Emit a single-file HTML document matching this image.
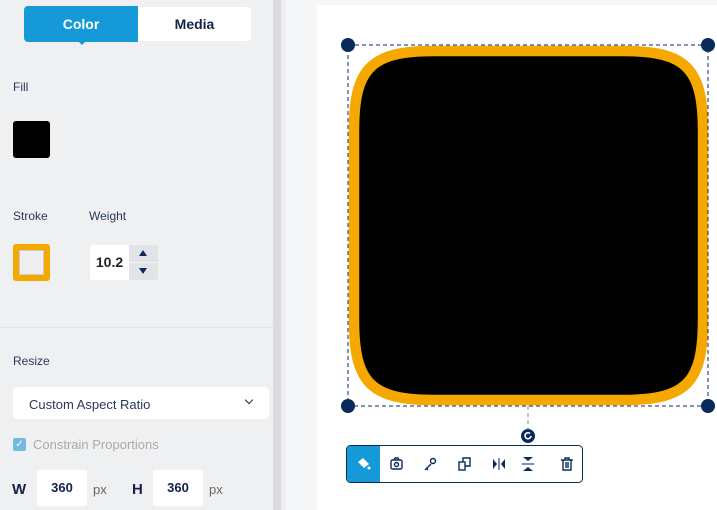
<html><head><style>
body{margin:0;width:717px;height:510px;overflow:hidden;font-family:"Liberation Sans",sans-serif;background:#f5f6f8;position:relative}
.a{position:absolute}
.lbl{font-size:12px;color:#2a3858}
</style></head><body>
<div class="a" style="left:0;top:0;width:273px;height:510px;background:#eff0f2"></div>
<div class="a" style="left:273px;top:0;width:8px;height:510px;background:#dcdcde"></div>
<div class="a" style="left:281px;top:0;width:5px;height:510px;background:#eceef0"></div>
<div class="a" style="left:317px;top:5px;width:400px;height:505px;background:#fff"></div>
<div class="a" style="left:0;top:327px;width:273px;height:1px;background:#e2e3e6"></div>
<div class="a" style="left:24px;top:6px;width:114px;height:36px;background:#1699d8;border-radius:4px 0 0 4px;color:#fff;font-weight:bold;font-size:14px;line-height:36px;text-align:center">Color</div>
<div class="a" style="left:77px;top:40px;width:0;height:0;border-left:5px solid transparent;border-right:5px solid transparent;border-top:5px solid #1699d8"></div>
<div class="a" style="left:138px;top:7px;width:113px;height:34px;background:#fff;border-radius:0 4px 4px 0;color:#14224a;font-weight:bold;font-size:14px;line-height:34px;text-align:center">Media</div>
<div class="a lbl" style="left:13px;top:80px">Fill</div>
<div class="a" style="left:13px;top:121px;width:37px;height:37px;background:#000;border-radius:3px"></div>
<div class="a lbl" style="left:13px;top:209px">Stroke</div>
<div class="a lbl" style="left:89px;top:209px">Weight</div>
<div class="a" style="left:13px;top:244px;width:25px;height:25px;background:#eee;border:6px solid #f5a800;border-radius:3px;box-shadow:inset 0 0 0 1px #ccc"></div>
<div class="a" style="left:90px;top:245px;width:39px;height:35px;background:#fff;border-radius:3px 0 0 3px;font-weight:bold;font-size:14px;line-height:35px;text-align:center;color:#222">10.2</div>
<div class="a" style="left:129px;top:245px;width:29px;height:35px;background:#e2e3e6;border-radius:0 3px 3px 0"></div>
<div class="a" style="left:129px;top:262px;width:29px;height:1px;background:#f3f3f5"></div>
<div class="a" style="left:139px;top:250px;border-left:4px solid transparent;border-right:4px solid transparent;border-bottom:6px solid #0b2a5c"></div>
<div class="a" style="left:139px;top:268px;border-left:4px solid transparent;border-right:4px solid transparent;border-top:6px solid #0b2a5c"></div>
<div class="a lbl" style="left:13px;top:354px">Resize</div>
<div class="a" style="left:13px;top:387px;width:256px;height:32px;background:#fff;border-radius:4px"></div>
<div class="a lbl" style="left:29px;top:397px;font-size:13px">Custom Aspect Ratio</div>
<div class="a" style="left:246px;top:397px;width:5px;height:5px;border-right:1.5px solid #1c2a4a;border-bottom:1.5px solid #1c2a4a;transform:rotate(45deg)"></div>
<div class="a" style="left:13px;top:438px;width:13px;height:13px;background:#74b9e3;border-radius:2px;color:#fff;font-size:10px;line-height:13px;text-align:center">✓</div>
<div class="a" style="left:33px;top:437px;font-size:13px;color:#aaa">Constrain Proportions</div>
<div class="a" style="left:12px;top:481px;font-size:15px;font-weight:bold;color:#14224a">W</div>
<div class="a" style="left:37px;top:470px;width:50px;height:36px;background:#fff;font-weight:bold;font-size:13px;color:#14224a;text-align:center;line-height:36px">360</div>
<div class="a" style="left:93px;top:482px;font-size:13px;color:#666">px</div>
<div class="a" style="left:132px;top:481px;font-size:15px;font-weight:bold;color:#14224a">H</div>
<div class="a" style="left:153px;top:470px;width:50px;height:36px;background:#fff;font-weight:bold;font-size:13px;color:#14224a;text-align:center;line-height:36px">360</div>
<div class="a" style="left:209px;top:482px;font-size:13px;color:#666">px</div>
<svg class="a" style="left:0;top:0" width="717" height="510">
<path d="M354 131C354 68 371 51 434 51H623C686 51 703 68 703 131V320C703 383 686 400 623 400H434C371 400 354 383 354 320Z" fill="#000" stroke="#f5a800" stroke-width="10.5"/>
<rect x="348" y="45" width="360" height="361" fill="none" stroke="#0b2a5c" stroke-dasharray="4 3"/>
<line x1="528" y1="406" x2="528" y2="430" stroke="#8090a8" stroke-dasharray="4 3"/>
<circle cx="348" cy="45" r="7" fill="#0b2a5c"/><circle cx="708" cy="45" r="7" fill="#0b2a5c"/>
<circle cx="348" cy="406" r="7" fill="#0b2a5c"/><circle cx="708" cy="406" r="7" fill="#0b2a5c"/>
<circle cx="528" cy="436" r="7" fill="#0b2a5c"/>
<path d="M531 436a3 3 0 1 1-1-2.5" fill="none" stroke="#fff" stroke-width="1.6"/>
<rect x="346.5" y="445.5" width="236" height="37" rx="4" fill="#fff" stroke="#0b2a5c"/>
<path d="M347 449a3 3 0 0 1 3-3h30v36h-30a3 3 0 0 1-3-3z" fill="#1699d8"/>
<path d="M358 462l5-4 6 6-5 4z" fill="#fff"/><circle cx="369" cy="468" r="1.5" fill="#fff"/>
<g stroke="#0b2a5c" fill="none" stroke-width="1.4">
<rect x="391" y="460" width="11" height="9" rx="1.5"/><circle cx="396.5" cy="464.5" r="2"/><path d="M394 460l1-2h3l1 2"/>
<path d="M425 470l6-6"/><circle cx="433" cy="461" r="2.5"/><path d="M426 468l2 2"/>
<rect x="459" y="462" width="6" height="8"/><path d="M463 462v-4h7v8h-5"/>
<path d="M499 458v12" stroke-width="1"/>
</g>
<g fill="#0b2a5c">
<path d="M493 459l4 5-4 5z M505 459l-4 5 4 5z"/>
<path d="M528 461l-5-4h10z M528 467l-5 4h10z"/><rect x="522" y="463.5" width="12" height="1"/>
</g>
<g stroke="#0b2a5c" fill="none" stroke-width="1.4"><path d="M561 460h12M563 460v10h8v-10M565 460v-2h4v2M566 462v6M568 462v6"/></g>
</svg>
</body></html>
